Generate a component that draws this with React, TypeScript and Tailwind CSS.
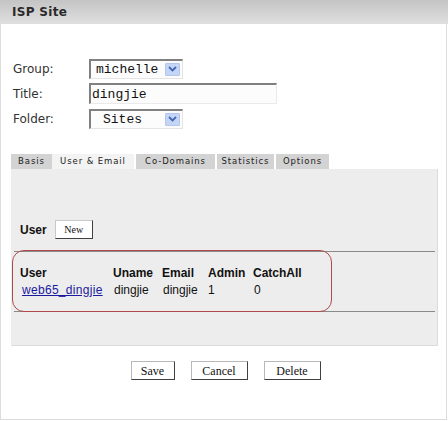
import React from "react";

const Chevron = () => (
  <span className="flex items-center justify-center w-[15px] h-[13px] bg-[#c5d5f5] border border-[#b3c6ee] rounded-[1px]">
    <svg width="9" height="6" viewBox="0 0 9 6">
      <path d="M1 1 L4.5 4.5 L8 1" fill="none" stroke="#4468b4" strokeWidth="1.8" />
    </svg>
  </span>
);

const FormSelect = ({ value, center }: { value: string; center?: boolean }) => (
  <div className="flex items-center w-[94px] h-[20px] bg-[#fcfcfc] border-t-2 border-l-2 border-t-[#808080] border-l-[#808080] border-r border-b border-r-[#e4e4e4] border-b-[#e4e4e4] pr-[2px]">
    <span
      className={
        "flex-1 text-[13px] text-[#111] leading-none " +
        (center ? "pl-[12px]" : "pl-[5px]")
      }
      style={{ fontFamily: '"Liberation Mono", monospace' }}
    >
      {value}
    </span>
    <Chevron />
  </div>
);

const Btn = ({ label, w }: { label: string; w: string }) => (
  <div
    className={
      "flex items-center justify-center h-[19px] bg-white border border-[#b8b8b8] border-r-[#404040] border-b-[#404040] text-[12px] text-[#111] " +
      w
    }
    style={{ fontFamily: '"Liberation Serif", serif' }}
  >
    {label}
  </div>
);

export default function App() {
  const sans = { fontFamily: '"DejaVu Sans", Verdana, sans-serif' };
  const arial = { fontFamily: '"Liberation Sans", Arial, sans-serif' };
  return (
    <div className="w-[448px] h-[421px] bg-white overflow-hidden" style={sans}>
      <div className="h-[24px] bg-gradient-to-b from-[#c4c4c4] to-[#dfdfdf] flex items-center pl-[12px]">
        <span className="text-[12px] font-bold text-[#2a2a2a] tracking-[0.3px]">ISP Site</span>
      </div>
      <div className="w-[447px] h-[396px] border-l border-r border-b border-[#dcdcdc] flex flex-col">
        <div className="pt-[32px] flex flex-col">
          <div className="flex items-center h-[25px]">
            <span className="w-[88px] pl-[12px] text-[12px] text-[#333]">Group:</span>
            <FormSelect value="michelle" />
          </div>
          <div className="flex items-center h-[25px]">
            <span className="w-[88px] pl-[12px] text-[12px] text-[#333]">Title:</span>
            <div className="w-[188px] h-[21px] bg-[#fcfcfc] border-t-2 border-l-2 border-t-[#808080] border-l-[#808080] border-r border-b border-r-[#eaeaea] border-b-[#eaeaea] flex items-center pl-[1px]">
              <span className="text-[13px] text-[#111] leading-none" style={{ fontFamily: '"Liberation Mono", monospace' }}>
                dingjie
              </span>
            </div>
          </div>
          <div className="flex items-center h-[25px]">
            <span className="w-[88px] pl-[12px] text-[12px] text-[#333]">Folder:</span>
            <FormSelect value="Sites" center />
          </div>
        </div>

        <div className="mt-[23px] ml-[10px] flex items-end h-[15px] text-[8.5px] tracking-[0.9px] text-[#222]">
          <div className="h-[15px] w-[41px] bg-[#d3d3d3] flex items-center justify-center">Basis</div>
          <div className="h-[15px] w-[82px] bg-[#f3f3f3] flex items-center justify-center">User &amp; Email</div>
          <div className="h-[15px] w-[79px] ml-[2px] bg-[#d3d3d3] flex items-center justify-center">Co-Domains</div>
          <div className="h-[15px] w-[57px] ml-[2px] bg-[#d3d3d3] flex items-center justify-center">Statistics</div>
          <div className="h-[15px] w-[53px] ml-[2px] bg-[#d3d3d3] flex items-center justify-center">Options</div>
        </div>
        <div className="ml-[10px] w-[427px] h-[177px] bg-[#ededed] border-r border-b border-[#dcdcdc] flex flex-col px-[3px]" style={arial}>
          <div className="mt-[51px] ml-[6px] flex items-center h-[19px]">
            <span className="text-[12px] font-bold text-[#111]">User</span>
            <div
              className="ml-[8px] w-[38px] h-[19px] bg-white border border-[#c8c8c8] border-r-[#404040] border-b-[#404040] flex items-center justify-center text-[10px] text-[#111]"
              style={{ fontFamily: '"Liberation Serif", serif' }}
            >
              New
            </div>
          </div>
          <div className="mt-[12px] w-[421px] h-[61px] border-t border-b border-[#8a8a8a]">
            <div className="-ml-[2px] -mt-[2px] w-[320px] h-[62px] rounded-[12px] border border-[#b04a4a] pt-[13px] pl-[7px] text-[12px] text-[#111]">
              <div className="grid grid-cols-[93px_49px_46px_45px_70px] h-[17px] items-center font-bold">
                <span>User</span>
                <span>Uname</span>
                <span>Email</span>
                <span>Admin</span>
                <span>CatchAll</span>
              </div>
              <div className="grid grid-cols-[93px_49px_46px_45px_70px] h-[17px] items-center">
                <span className="pl-[2px] text-[#1a1aa0] underline tracking-[0.3px]">web65_dingjie</span>
                <span className="pl-[1px]">dingjie</span>
                <span className="pl-[1px]">dingjie</span>
                <span>1</span>
                <span className="pl-[1px]">0</span>
              </div>
            </div>
          </div>
        </div>

        <div className="mt-[15px] flex justify-center gap-[16px] pl-[4px]">
          <Btn label="Save" w="w-[44px]" />
          <Btn label="Cancel" w="w-[57px]" />
          <Btn label="Delete" w="w-[57px]" />
        </div>
      </div>
    </div>
  );
}
